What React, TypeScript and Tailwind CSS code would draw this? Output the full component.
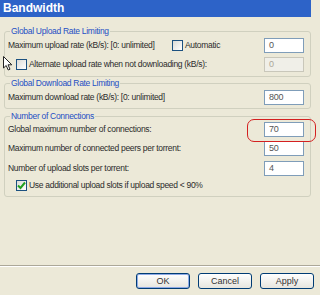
import React from "react";

const font = { fontFamily: '"Liberation Sans", Arial, sans-serif' };

const Checkbox = ({ checked = false }: { checked?: boolean }) => (
  <span className="flex h-[11px] w-[11px] shrink-0 items-center justify-center border border-[#1c5180] bg-gradient-to-br from-[#dcdcd7] to-white">
    {checked && (
      <svg width="9" height="9" viewBox="0 0 9 9">
        <path d="M1 4.5 L3.5 7 L8 1.5" stroke="#21a121" strokeWidth="2" fill="none" />
      </svg>
    )}
  </span>
);

const Field = ({ value, disabled = false }: { value: string; disabled?: boolean }) => (
  <div
    className={`flex h-[15px] w-[40px] shrink-0 items-center pl-[4px] text-[9px] leading-none ${
      disabled ? "border border-[#c9c7ba] bg-[#f0efe8] text-[#aca899]" : "border border-[#7f9db9] bg-white text-[#555]"
    }`}
  >
    {value}
  </div>
);

const Group = ({ title, className, children }: { title: string; className: string; children: React.ReactNode }) => (
  <fieldset className={`ml-[4px] mr-[9px] rounded-[3px] border border-[#d0d0bf] pl-[2px] pr-[6px] ${className}`}>
    <legend className="ml-[3px] px-[1px] text-[8.5px] leading-[10px] tracking-[-0.3px] text-[#1f4fc4]">{title}</legend>
    {children}
  </fieldset>
);

const Button = ({ label, primary = false }: { label: string; primary?: boolean }) => (
  <button
    className={`flex h-[16px] w-[54px] items-center justify-center rounded-[3px] border border-[#003c74] bg-gradient-to-b from-white to-[#e6e5de] text-[9px] leading-none text-[#333] ${
      primary ? "shadow-[inset_0_0_0_1px_#8eaae6]" : ""
    }`}
  >
    {label}
  </button>
);

export default function App() {
  return (
    <div
      className="relative flex h-[295px] w-[320px] flex-col overflow-hidden whitespace-nowrap bg-[#ece9d8] text-[8.5px] tracking-[-0.3px] text-[#2b2b2b]"
      style={font}
    >
      <div className="h-[17px] w-[311px] bg-[#2d63c8] pl-[3px] text-[12px] font-bold leading-[17px] tracking-normal text-white">
        Bandwidth
      </div>

      <Group title="Global Upload Rate Limiting" className="mt-[9px] pt-[2px] pb-[4px]">
        <div className="flex h-[15px] items-center">
          <span className="w-[165px] pl-[1px]">Maximum upload rate (kB/s): [0: unlimited]</span>
          <Checkbox />
          <span className="ml-[2px]">Automatic</span>
          <div className="ml-auto">
            <Field value="0" />
          </div>
        </div>
        <div className="mt-[4px] flex h-[15px] items-center">
          <span className="pl-[9px]">
            <Checkbox />
          </span>
          <span className="ml-[2px]">Alternate upload rate when not downloading (kB/s):</span>
          <div className="ml-auto">
            <Field value="0" disabled />
          </div>
        </div>
      </Group>

      <Group title="Global Download Rate Limiting" className="mt-[1px] pt-[2px] pb-[3px]">
        <div className="flex h-[15px] items-center">
          <span className="pl-[1px]">Maximum download rate (kB/s): [0: unlimited]</span>
          <div className="ml-auto">
            <Field value="800" />
          </div>
        </div>
      </Group>

      <Group title="Number of Connections" className="mt-[2px] pt-[1px] pb-[5px]">
        <div className="flex h-[15px] items-center">
          <span className="pl-[1px]">Global maximum number of connections:</span>
          <div className="ml-auto">
            <Field value="70" />
          </div>
        </div>
        <div className="mt-[4px] flex h-[15px] items-center">
          <span className="pl-[1px]">Maximum number of connected peers per torrent:</span>
          <div className="ml-auto">
            <Field value="50" />
          </div>
        </div>
        <div className="mt-[5px] flex h-[15px] items-center">
          <span className="pl-[1px]">Number of upload slots per torrent:</span>
          <div className="ml-auto">
            <Field value="4" />
          </div>
        </div>
        <div className="mt-[4px] flex h-[11px] items-center">
          <span className="pl-[9px]">
            <Checkbox checked />
          </span>
          <span className="ml-[2px]">Use additional upload slots if upload speed &lt; 90%</span>
        </div>
      </Group>

      <div className="flex-1" />
      <div className="h-[2px] border-t border-b border-t-[#aca899] border-b-white" />
      <div className="flex justify-end gap-[8px] pt-[6px] pr-[6px] pb-[6px] tracking-normal">
        <Button label="OK" primary />
        <Button label="Cancel" />
        <Button label="Apply" />
      </div>

      {/* red highlight drawn over the connections field */}
      <div className="absolute left-[247px] top-[119px] h-[23px] w-[69px] rounded-[7px] border-[1.5px] border-[#d42020]" />

      {/* mouse cursor */}
      <svg className="absolute left-[3px] top-[56px]" width="10" height="15" viewBox="0 0 10 15">
        <path d="M0.5 0.5 L0.5 12 L3.2 9.5 L5.2 14 L7 13.2 L5 8.8 L8.8 8.8 Z" fill="white" stroke="#222" strokeWidth="1" strokeLinejoin="round" />
      </svg>
    </div>
  );
}
